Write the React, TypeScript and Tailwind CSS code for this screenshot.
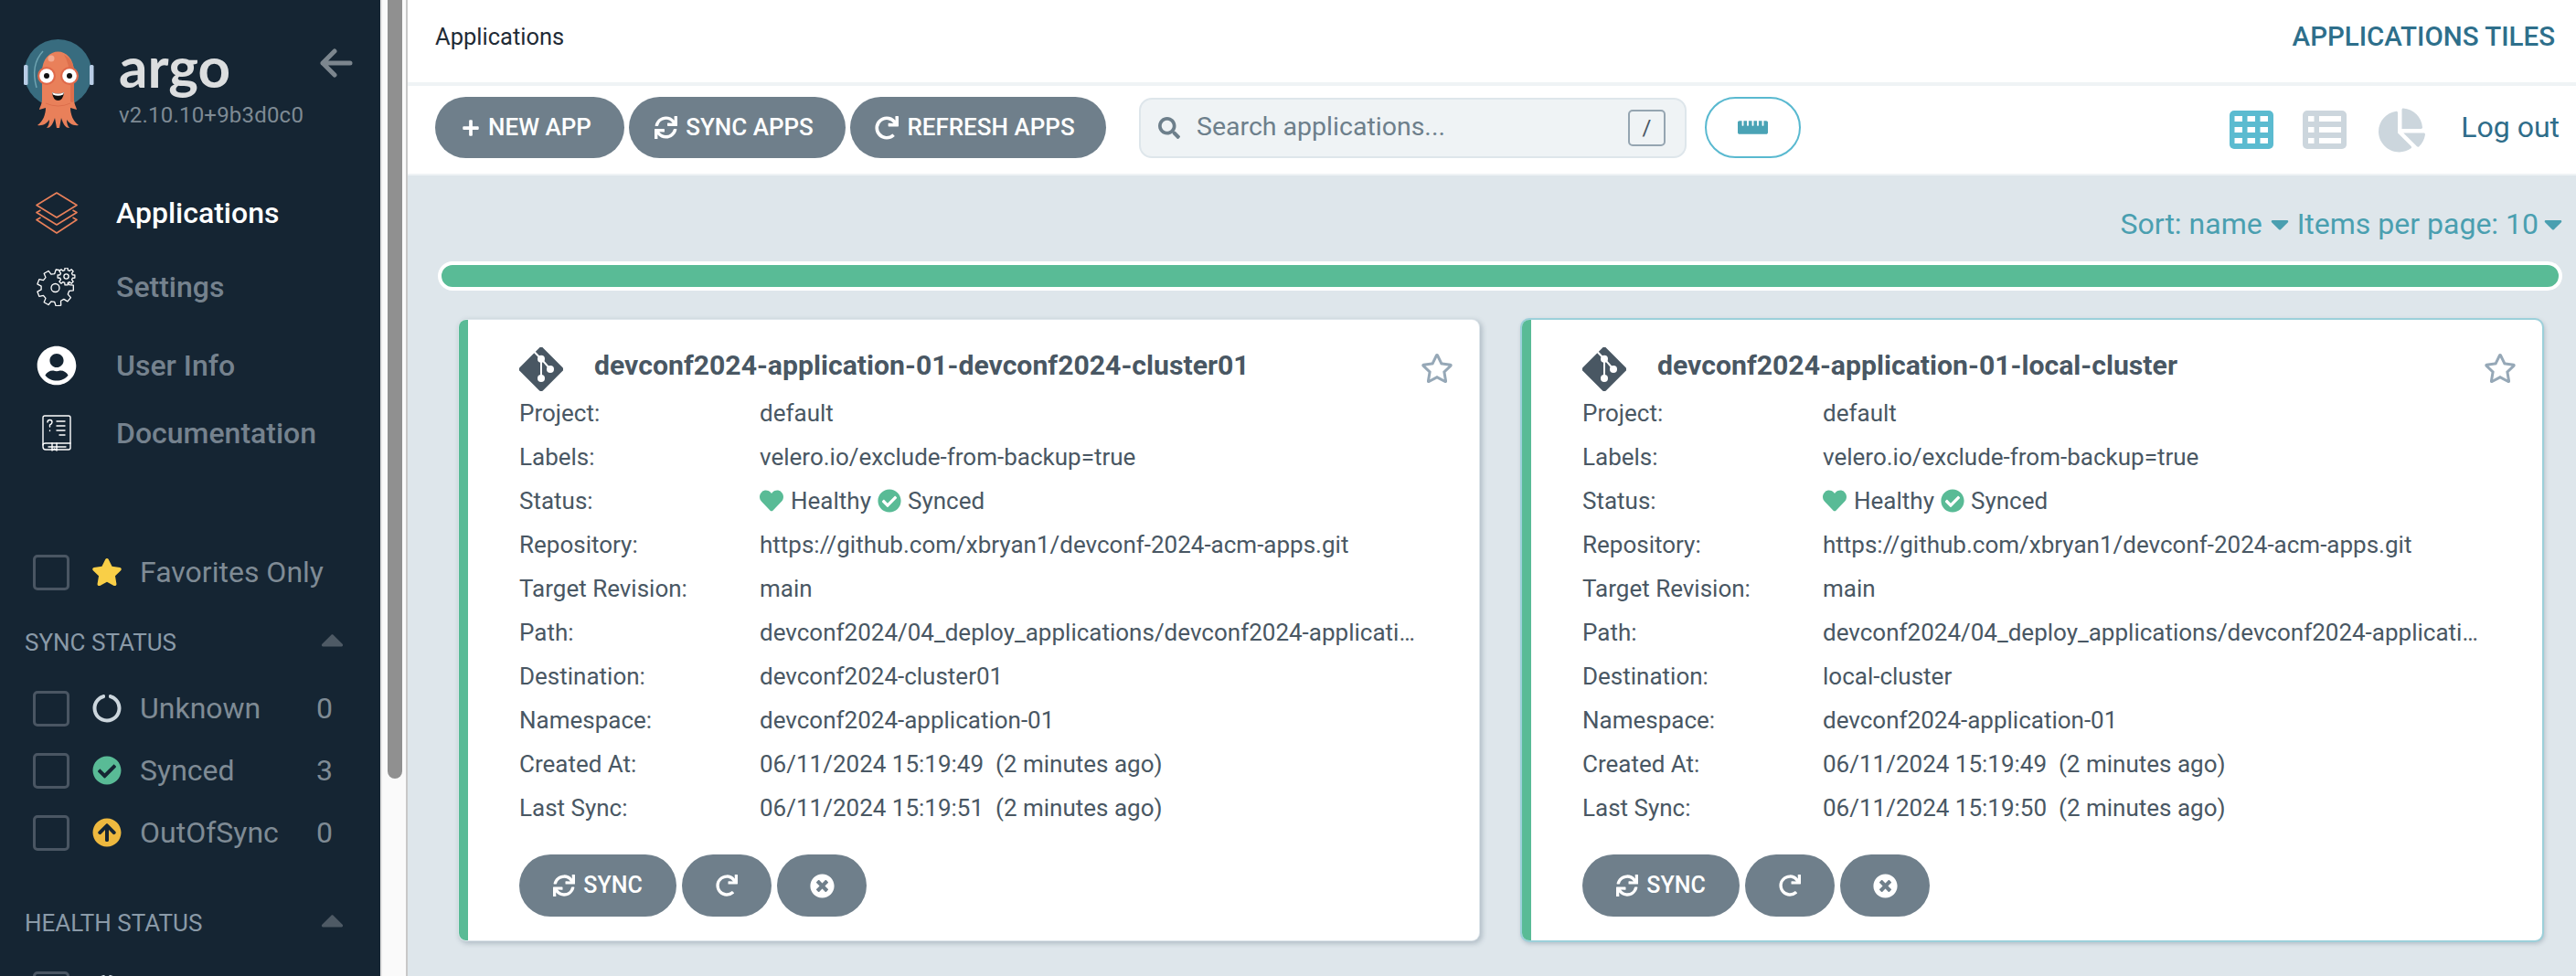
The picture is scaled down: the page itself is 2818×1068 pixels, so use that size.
import type { ReactNode } from "react";
import {
  FaArrowCircleUp,
  FaCaretDown,
  FaCaretUp,
  FaChartPie,
  FaCheckCircle,
  FaCircleNotch,
  FaHeart,
  FaPlus,
  FaRedo,
  FaRegStar,
  FaRulerHorizontal,
  FaSearch,
  FaStar,
  FaSync,
  FaTimesCircle,
  FaUserCircle,
} from "react-icons/fa";

function gearPath(cx: number, cy: number, outer: number, inner: number, teeth: number) {
  const pts: string[] = [];
  for (let i = 0; i < teeth; i++) {
    const step = (Math.PI * 2) / teeth;
    const a = i * step;
    const offsets: [number, number][] = [
      [inner, -0.32],
      [outer, -0.2],
      [outer, 0.2],
      [inner, 0.32],
    ];
    offsets.forEach(([r, o]) => {
      const x = cx + r * Math.cos(a + o * step);
      const y = cy + r * Math.sin(a + o * step);
      pts.push(`${x.toFixed(2)} ${y.toFixed(2)}`);
    });
  }
  return "M" + pts.join("L") + "Z";
}

function ArgoLogo() {
  return (
    <svg viewBox="26 40 78 100" className="h-[100px] w-[78px] shrink-0">
      <circle cx="63.5" cy="79" r="37" fill="#386c7f" />
      <rect x="26" y="70" width="4.5" height="22" rx="1.5" fill="#b9cde6" />
      <rect x="98" y="70" width="4.5" height="22" rx="1.5" fill="#b9cde6" />
      <path d="M47 55Q33 70 40 95" fill="none" stroke="#6ea3b1" strokeWidth="1.5" />
      <path
        d="M46 108V78C46 48 81 48 81 78V108C81 113 84 117 84 119L77 117C77 124 80 132 86 136C80 137 76 134 73 130C73 134 74 137 76 139C71 139 69 134 67 128L65 139H62L60 128C58 134 56 139 51 139C53 137 54 134 54 130C51 134 47 137 41 136C47 132 50 124 50 117L43 119C43 117 46 113 46 108Z"
        fill="#e9805a"
      />
      <path d="M70 59C78 63 81 70 81 78V108C81 111 79 112 77 110C77 90 78 72 70 59Z" fill="#dd6f4c" />
      <circle cx="56" cy="63" r="3.5" fill="#f3aa90" />
      <circle cx="51" cy="82" r="10" fill="#e0694a" />
      <circle cx="76" cy="82" r="10" fill="#e0694a" />
      <circle cx="51" cy="82" r="7.8" fill="#fff" />
      <circle cx="76" cy="82" r="7.8" fill="#fff" />
      <circle cx="51" cy="82" r="3" fill="#111" />
      <circle cx="76" cy="82" r="3" fill="#111" />
      <path d="M57 100Q63.5 103 70 100Q69 109 63.5 109Q58 109 57 100Z" fill="#111" />
      <path d="M57 100Q63.5 103 70 100L69 102.5Q63.5 105 58 102.5Z" fill="#fff" />
      <path d="M50 112Q63.5 118 77 112" fill="none" stroke="#dd6f4c" strokeWidth="1" />
    </svg>
  );
}

function LayersIcon() {
  return (
    <svg viewBox="0 0 46 46" className="h-[46px] w-[46px]" fill="none" stroke="#e9805a" strokeWidth="1.6" strokeLinejoin="round">
      <path d="M23 1L45 14.5L23 28L1 14.5Z" />
      <path d="M5.5 20L1 22.5L23 36L45 22.5L40.5 20" />
      <path d="M5.5 28L1 30.5L23 45L45 30.5L40.5 28" />
    </svg>
  );
}

function GearsIcon() {
  return (
    <svg viewBox="0 0 44 42" className="h-[42px] w-[44px]" fill="none" stroke="#fff" strokeWidth="1.3" strokeLinejoin="round">
      <path d={gearPath(20.5, 22, 20, 15.5, 9)} />
      <circle cx="20.5" cy="22" r="4.5" />
      <path d={gearPath(32.5, 9.5, 9.5, 7, 8)} fill="#152533" />
      <circle cx="32.5" cy="9.5" r="2.6" />
    </svg>
  );
}

function DocsIcon() {
  return (
    <svg viewBox="0 0 32 40" className="h-[40px] w-[32px]" fill="none" stroke="#fff" strokeWidth="1.4" strokeLinejoin="round" strokeLinecap="round">
      <path d="M3 1H29Q31 1 31 3V36Q31 38 29 38H4Q1 38 1 35V3Q1 1 3 1Z" />
      <path d="M1 33Q1 31 4 31H31" />
      <path d="M7 35H26M11 31V39L13.5 37L16 39V31" />
      <path d="M16 7H25M16 12H25M16 17H25M19 22H25" />
      <path d="M6 8Q6 5.500 8.500 5.500Q11 5.500 11 8Q11 10 8.500 11V13" />
      <path d="M8.500 17V17.500" />
    </svg>
  );
}

function GitDiamond() {
  return (
    <svg viewBox="0 0 48 48" className="h-[48px] w-[48px] shrink-0">
      <rect x="6" y="6" width="36" height="36" rx="3" transform="rotate(45 24 24)" fill="#495763" />
      <path d="M16.500 5L24 12.700V34M24 12.700L34 24" fill="none" stroke="#fff" strokeWidth="2" />
      <circle cx="24" cy="12.700" r="4" fill="#fff" />
      <circle cx="34" cy="24" r="4" fill="#fff" />
      <circle cx="24" cy="34" r="4" fill="#fff" />
    </svg>
  );
}

function GridIcon() {
  return (
    <svg viewBox="0 0 48 42" className="mt-[5px] ml-auto h-[42px] w-[48px]">
      <rect width="48" height="42" rx="5" fill="#5bbbd0" />
      {[6, 18, 30].map((y) =>
        [5.500, 19.500, 33.500].map((x) => <rect key={`${x}-${y}`} x={x} y={y} width="8.500" height="6" fill="#fff" />),
      )}
    </svg>
  );
}

function ListIcon() {
  return (
    <svg viewBox="0 0 48 42" className="mt-[5px] ml-[32px] h-[42px] w-[48px]">
      <rect width="48" height="42" rx="5" fill="#ccd6dd" />
      {[6, 18, 30].map((y) => (
        <g key={y} fill="#fff">
          <rect x="6" y={y} width="6.500" height="6" />
          <rect x="18" y={y} width="24" height="6" />
        </g>
      ))}
    </svg>
  );
}

function NavItem({ icon, label, active, className }: { icon: ReactNode; label: string; active?: boolean; className: string }) {
  return (
    <div className={`flex h-[48px] items-center ${className}`}>
      <div className="ml-[36px] flex w-[52px] items-center justify-center">{icon}</div>
      <span className={`ml-[39px] text-[32px] font-medium ${active ? "text-white" : "text-[#75828e]"}`}>{label}</span>
    </div>
  );
}

function Checkbox() {
  return <div className="h-[39px] w-[40px] shrink-0 rounded-[5px] border-[3px] border-[#4a5663]" />;
}

function FilterRow({ icon, label, count, className = "" }: { icon: ReactNode; label: string; count?: number; className?: string }) {
  return (
    <div className={`ml-[36px] flex h-[48px] w-[328px] items-center ${className}`}>
      <Checkbox />
      <div className="ml-[24px] flex w-[34px] items-center justify-center">{icon}</div>
      <span className="ml-[19px] text-[32px] text-[#7f8b95]">{label}</span>
      {count !== undefined && <span className="ml-auto text-[32px] text-[#7f8b95]">{count}</span>}
    </div>
  );
}

function FilterHeader({ label, className }: { label: string; className: string }) {
  return (
    <div className={`ml-[27px] flex h-[40px] w-[349px] items-center justify-between ${className}`}>
      <span className="text-[26px] text-[#8a9aa8]">{label}</span>
      <FaCaretUp className="mt-[-6px] h-[40px] w-[25px] text-[#4e5a65]" />
    </div>
  );
}

function Sidebar() {
  return (
    <aside className="h-full w-[416px] shrink-0 overflow-hidden bg-[#152533] pt-[41px]">
      <div className="flex h-[100px] items-start pl-[26px]">
        <ArgoLogo />
        <div className="ml-[26px] flex w-[220px] flex-col">
          <span className="h-[70px] font-['Lato',sans-serif] text-[62px] leading-[62px] font-bold text-[#dcdedf]">argo</span>
          <span className="text-[24px] leading-[30px] tracking-[0.2px] text-[#7e8a94]">v2.10.10+9b3d0c0</span>
        </div>
        <svg viewBox="0 0 36 32" className="mt-[12px] h-[32px] w-[36px]" fill="none" stroke="#7c868e" strokeWidth="5" strokeLinecap="round" strokeLinejoin="round">
          <path d="M3 16H33M16 3L3 16L16 29" />
        </svg>
      </div>
      <NavItem className="mt-[68px]" active label="Applications" icon={<LayersIcon />} />
      <NavItem className="mt-[33px]" label="Settings" icon={<GearsIcon />} />
      <NavItem className="mt-[38px]" label="User Info" icon={<FaUserCircle className="h-[44px] w-[44px] text-white" />} />
      <NavItem className="mt-[26px]" label="Documentation" icon={<DocsIcon />} />
      <FilterRow className="mt-[104px]" label="Favorites Only" icon={<FaStar className="h-[32px] w-[34px] text-[#f9cf47]" />} />
      <FilterHeader className="mt-[33px]" label="SYNC STATUS" />
      <FilterRow className="mt-[28px]" label="Unknown" count={0} icon={<FaCircleNotch className="h-[32px] w-[32px] text-[#ccd6dd]" />} />
      <FilterRow className="mt-[20px]" label="Synced" count={3} icon={<FaCheckCircle className="h-[32px] w-[32px] text-[#59bb96]" />} />
      <FilterRow className="mt-[20px]" label="OutOfSync" count={0} icon={<FaArrowCircleUp className="h-[32px] w-[32px] text-[#eeb93f]" />} />
      <FilterHeader className="mt-[55px]" label="HEALTH STATUS" />
      <FilterRow className="mt-[28px]" label="Unknown" count={0} icon={<FaCircleNotch className="h-[32px] w-[32px] text-[#ccd6dd]" />} />
    </aside>
  );
}

function Scrollbar() {
  return (
    <div className="h-full w-[30px] shrink-0 border-r-2 border-l-2 border-r-[#c8c8c8] border-l-[#e4e4e4] bg-[#fafafa] pl-[6px]">
      <div className="h-[852px] w-[16px] rounded-b-[8px] bg-[#909090]" />
    </div>
  );
}

function PillButton({ icon, label, className }: { icon: ReactNode; label?: string; className: string }) {
  return (
    <button className={`flex items-center justify-center gap-[9px] rounded-[34px] bg-[#6f7f8b] font-medium text-white ${className}`}>
      {icon}
      {label && <span>{label}</span>}
    </button>
  );
}

function Toolbar() {
  return (
    <div className="flex h-[98px] shrink-0 items-center border-b-2 border-b-[#eff3f5] pr-[18px] pb-[5px] pl-[30px]">
      <PillButton className="h-[67px] w-[207px] pr-[7px] text-[26px]" label="NEW APP" icon={<FaPlus className="h-[20px] w-[20px]" />} />
      <PillButton className="ml-[5px] h-[67px] w-[237px] pr-[7px] text-[26px]" label="SYNC APPS" icon={<FaSync className="h-[25px] w-[25px]" />} />
      <PillButton className="ml-[5px] h-[67px] w-[280px] pr-[7px] text-[26px]" label="REFRESH APPS" icon={<FaRedo className="h-[26px] w-[26px]" />} />
      <div className="ml-[36px] flex h-[66px] w-[599px] items-center rounded-[14px] border-2 border-[#dee6eb] bg-[#eff3f5] pr-[21px] pl-[19px]">
        <FaSearch className="h-[24px] w-[24px] text-[#6d7f8b]" />
        <span className="ml-[18px] text-[28.5px] text-[#6d7f8b]">Search applications...</span>
        <kbd className="ml-auto flex h-[40px] w-[41px] items-center justify-center rounded-[5px] border-2 border-[#95a5b1] font-['Roboto',sans-serif] text-[24px] text-[#495763]">/</kbd>
      </div>
      <button className="ml-[20px] flex h-[67px] w-[105px] items-center justify-center rounded-[34px] border-2 border-[#59b9d0]">
        <FaRulerHorizontal className="h-[33px] w-[33px] text-[#4aa3b5]" />
      </button>
      <GridIcon />
      <ListIcon />
      <FaChartPie className="mt-[5px] ml-[35px] h-[51px] w-[51px] text-[#ccd6dd]" />
      <span className="ml-[39px] pb-[2px] text-[32px] text-[#2f6d8a]">Log out</span>
    </div>
  );
}

type AppInfo = {
  title: string;
  destination: string;
  lastSync: string;
  selected?: boolean;
};

function InfoRow({ label, children }: { label: string; children: ReactNode }) {
  return (
    <div className="grid h-[48px] grid-cols-[263px_721px] items-center text-[26px] text-[#495763]">
      <span>{label}</span>
      <div className="truncate">{children}</div>
    </div>
  );
}

function AppCard({ app }: { app: AppInfo }) {
  return (
    <div className={`rounded-[10px] border-2 bg-white bg-clip-padding ${app.selected ? "border-[#9cd0da] shadow-[1px_2px_4px_rgba(90,110,125,0.3)]" : "border-transparent shadow-[2px_2px_5px_rgba(90,110,125,0.3)]"}`}>
      <div className="rounded-[8px] border-l-[10px] border-l-[#59bb96] pt-[30px] pr-[28px] pb-[26px] pl-[56px]">
        <div className="flex h-[48px] items-center">
          <GitDiamond />
          <span className="mb-[8px] ml-[34px] text-[30.2px] leading-[40px] font-bold text-[#495763]">{app.title}</span>
          <FaRegStar className="mt-[-2px] ml-auto h-[34px] w-[36px] text-[#96a8b7]" />
        </div>
        <InfoRow label="Project:">default</InfoRow>
        <InfoRow label="Labels:">velero.io/exclude-from-backup=true</InfoRow>
        <InfoRow label="Status:">
          <div className="flex items-center">
            <FaHeart className="h-[26px] w-[26px] text-[#59bb96]" />
            <span className="ml-[8px]">Healthy</span>
            <FaCheckCircle className="ml-[7px] h-[26px] w-[26px] text-[#59bb96]" />
            <span className="ml-[7px]">Synced</span>
          </div>
        </InfoRow>
        <InfoRow label="Repository:">https://github.com/xbryan1/devconf-2024-acm-apps.git</InfoRow>
        <InfoRow label="Target Revision:">main</InfoRow>
        <InfoRow label="Path:">devconf2024/04_deploy_applications/devconf2024-application-01</InfoRow>
        <InfoRow label="Destination:">{app.destination}</InfoRow>
        <InfoRow label="Namespace:">devconf2024-application-01</InfoRow>
        <InfoRow label="Created At:">06/11/2024 15:19:49 &nbsp;(2 minutes ago)</InfoRow>
        <InfoRow label="Last Sync:">{app.lastSync} &nbsp;(2 minutes ago)</InfoRow>
        <div className="mt-[27px] flex gap-[6px]">
          <PillButton className="h-[68px] w-[172px] text-[25px]" label="SYNC" icon={<FaSync className="h-[24px] w-[24px]" />} />
          <PillButton className="h-[68px] w-[98px]" icon={<FaRedo className="h-[24px] w-[24px]" />} />
          <PillButton className="h-[68px] w-[98px]" icon={<FaTimesCircle className="h-[27px] w-[27px]" />} />
        </div>
      </div>
    </div>
  );
}

const apps: AppInfo[] = [
  {
    title: "devconf2024-application-01-devconf2024-cluster01",
    destination: "devconf2024-cluster01",
    lastSync: "06/11/2024 15:19:51",
  },
  {
    title: "devconf2024-application-01-local-cluster",
    destination: "local-cluster",
    lastSync: "06/11/2024 15:19:50",
    selected: true,
  },
];

export default function App() {
  return (
    <div className="flex h-[1068px] w-[2818px] overflow-hidden bg-white font-['Roboto',sans-serif]">
      <Sidebar />
      <Scrollbar />
      <main className="flex h-full min-w-0 flex-1 flex-col">
        <div className="flex h-[94px] shrink-0 items-center justify-between border-b-4 border-b-[#eff3f5] pr-[23px] pb-[10px] pl-[30px]">
          <span className="text-[25.5px] text-[#1f2b36]">Applications</span>
          <span className="text-[29.5px] font-medium text-[#2e6f8b]">APPLICATIONS TILES</span>
        </div>
        <Toolbar />
        <div className="flex-1 bg-[#dee6eb] pr-[15px] pl-[33px]">
          <div className="flex h-[94px] items-center justify-end pt-[12px] text-[32px] text-[#4a9fb0]">
            <span>Sort: name</span>
            <FaCaretDown className="mx-[9px] h-[32px] w-[20px]" />
            <span>Items per page: 10</span>
            <FaCaretDown className="ml-[6px] h-[32px] w-[20px]" />
          </div>
          <div className="h-[32px] rounded-full border-4 border-white bg-[#59bb96]" />
          <div className="mt-[30px] ml-[21px] grid w-[2283px] grid-cols-2 gap-[43px]">
            {apps.map((app) => (
              <AppCard key={app.title} app={app} />
            ))}
          </div>
        </div>
      </main>
    </div>
  );
}
